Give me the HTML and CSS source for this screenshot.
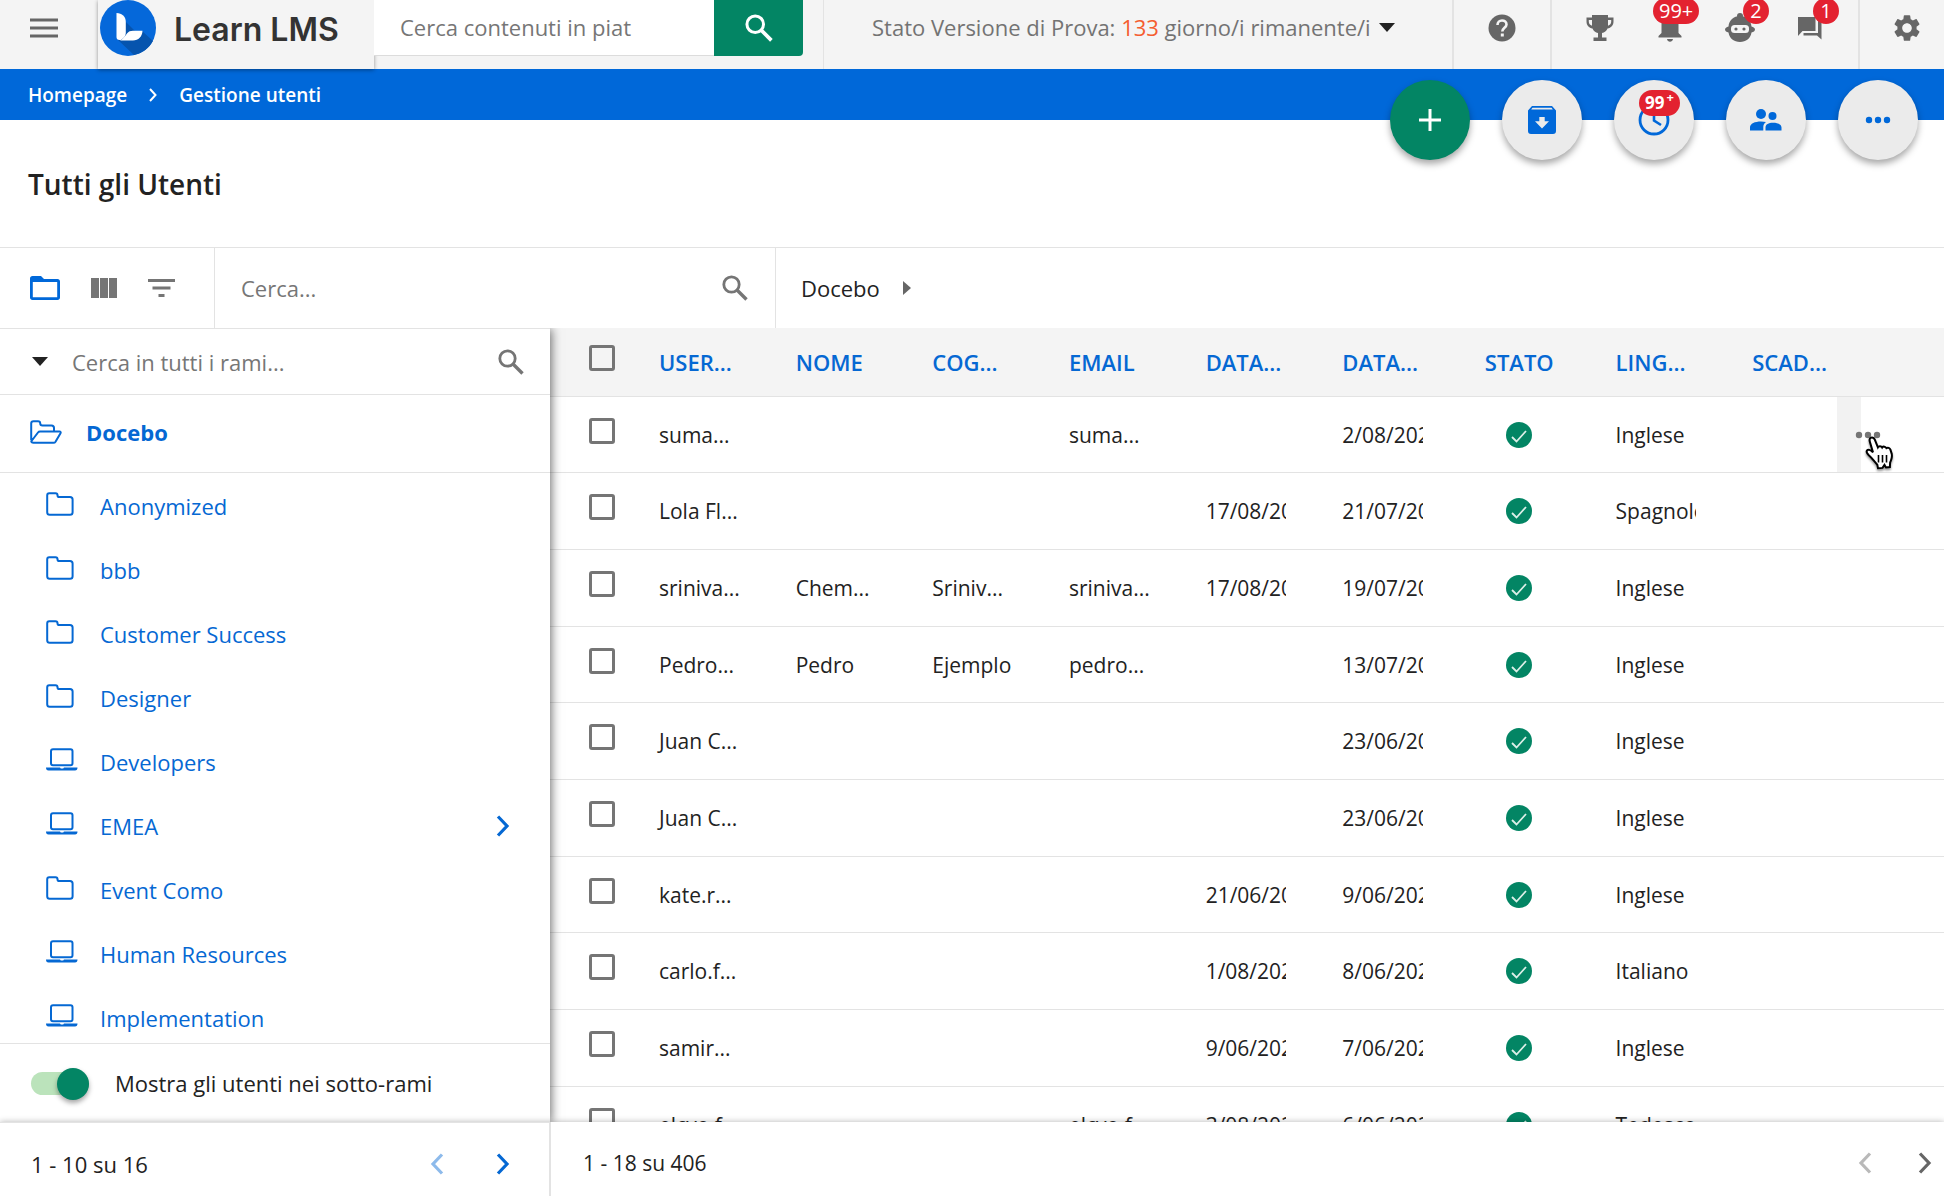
FILE: index.html
```html
<!DOCTYPE html>
<html lang="it">
<head>
    <meta charset="UTF-8">
    <meta name="viewport" content="width=device-width, initial-scale=1.0">
    <title>Gestione utenti - Learn LMS</title>
    <link rel="stylesheet" href="styles.css">
</head>
<body>
    <!-- Shared icons -->
    <svg class="sprite" aria-hidden="true">
        <symbol id="i-search" viewBox="0 0 26 26"><circle cx="9.5" cy="9.5" r="7.7" fill="none" stroke="currentColor" stroke-width="2.8"/><path d="M15 15l9.5 9.5" fill="none" stroke="currentColor" stroke-width="3.4"/></symbol>
        <symbol id="i-folder" viewBox="0 0 28 24"><path d="M3.2 1.2h6.3c1.3 0 2 .8 2 2 0 1.200.5 1.800 1.500 1.800h11c1.700 0 2.600.9 2.600 2.600v12.600c0 1.600-.9 2.500-2.600 2.500H3.700c-1.600 0-2.500-.9-2.500-2.500V3.400c0-1.400.7-2.200 2-2.200z" fill="none" stroke="currentColor" stroke-width="2"/></symbol>
        <symbol id="i-laptop" viewBox="0 0 32 24"><rect x="5" y="1.200" width="21.500" height="16" rx="2" fill="none" stroke="currentColor" stroke-width="2"/><path d="M0 19.500h14l.8 1h2.400l.8-1h13.500c0 1.800-.8 3-2.500 3h-26.500c-1.700 0-2.500-1.200-2.500-3z" fill="currentColor"/></symbol>
        <symbol id="i-next" viewBox="0 0 14 22"><path d="M2 1.500L11 11l-9 9.500" fill="none" stroke="currentColor" stroke-width="3.200"/></symbol>
        <symbol id="i-prev" viewBox="0 0 14 22"><path d="M12 1.500L3 11l9 9.500" fill="none" stroke="currentColor" stroke-width="3.200"/></symbol>
        <symbol id="i-check" viewBox="0 0 26 26"><circle cx="13" cy="13" r="13" fill="#038564"/><path d="M6 15l4.500 4.500L20 9" fill="none" stroke="#dcefe8" stroke-width="1.800"/></symbol>
        <symbol id="i-dots" viewBox="0 0 26 8"><circle cx="4" cy="4" r="3.200" fill="currentColor"/><circle cx="13" cy="4" r="3.200" fill="currentColor"/><circle cx="22" cy="4" r="3.200" fill="currentColor"/></symbol>
    </svg>

    <header class="topbar">
        <button class="menu-button" aria-label="Menu"><svg width="28" height="20" viewBox="0 0 28 20"><path d="M0 2h28M0 10h28M0 18h28" stroke="#666" stroke-width="3"/></svg></button>
        <a class="logo" href="#">
            <svg width="56" height="56" viewBox="0 0 56 56">
                <circle cx="28" cy="28" r="28" fill="#0568da"/>
                <path d="M25 21L35 31 42 31 53 41A28 28 0 0 1 34 55L18 40z" fill="#0654ae"/>
                <path d="M16.500 13c5.500 0 9.300 3.500 9.300 9v11c0 3-2 5-5 7h-1.300c-2 0-3-1-3-3z" fill="#fff"/>
                <path d="M20 40.500c3-1.500 5-4.500 7-7 1.500-2 3.500-2.700 6-2.700h9.500c-.3 6-4 9.700-9.500 9.700z" fill="#fff"/>
            </svg>
            <span>Learn LMS</span>
        </a>
        <form class="global-search">
            <input type="text" placeholder="Cerca contenuti in piat" aria-label="Cerca contenuti in piattaforma">
            <button type="button" aria-label="Cerca"><svg width="28" height="28"><use href="#i-search"/></svg></button>
        </form>
        <div class="trial">
            <button>Stato Versione di Prova: <b>133</b> giorno/i rimanente/i<svg width="16" height="9" viewBox="0 0 16 9"><path d="M0 0h16L8 9z" fill="#222"/></svg></button>
        </div>
        <div class="top-group help-group">
            <button aria-label="Aiuto"><svg width="28" height="28" viewBox="0 0 28 28"><circle cx="14" cy="14" r="13.500" fill="#666"/><path d="M9.500 11c0-2.800 2-4.500 4.500-4.500s4.500 1.600 4.500 4c0 3.200-4.200 3.500-4.200 7" fill="none" stroke="#f4f4f4" stroke-width="2.600"/><rect x="12.800" y="19.500" width="3" height="3" fill="#f4f4f4"/></svg></button>
        </div>
        <div class="top-group alerts-group">
            <button aria-label="Traguardi"><svg width="28" height="28" viewBox="0 0 28 28"><path d="M6 1h16v2.500h5.500v4c0 4-2.500 6.500-6 7-1 2.500-3 4-5.500 4.500v4.500h4.500V27h-13v-3.500H12V19c-2.500-.5-4.500-2-5.500-4.500-3.500-.5-6-3-6-7v-4H6zM2.800 6v1.500c0 2 1.200 3.600 3.200 4.300V6zM22 6v5.800c2-.7 3.200-2.300 3.200-4.300V6z" fill="#666"/></svg></button>
            <button aria-label="Notifiche"><svg width="24" height="28" viewBox="0 0 24 28"><path d="M12 0c1.500 0 2.300 1 2.300 2.500 4 1 6.200 4 6.200 8V19l3 3v1.500H.5V22l3-3v-8.500c0-4 2.200-7 6.200-8C9.700 1 10.500 0 12 0zM9 25h6c-.3 1.700-1.500 2.800-3 2.800S9.300 26.700 9 25z" fill="#666"/></svg><span class="badge badge-wide">99+</span></button>
            <button aria-label="Assistente"><svg width="30" height="30" viewBox="0 0 30 30"><circle cx="15" cy="3" r="3" fill="#666"/><path d="M15 3c6.500 0 11 4.500 11.500 10.500 2 .5 3.500 1.500 3.500 3s-1.500 2.500-3.500 3C25.500 25.500 21 29 15 29S4.500 25.500 3.500 19.500C1.500 19 0 18 0 16.500s1.500-2.500 3.500-3C4 7.500 8.500 3 15 3z" fill="#666"/><rect x="6" y="12" width="18" height="8" rx="3.500" fill="#f4f4f4"/><circle cx="11" cy="16" r="1.600" fill="#666"/><circle cx="19" cy="16" r="1.600" fill="#666"/></svg><span class="badge">2</span></button>
            <button aria-label="Messaggi"><svg width="24" height="24" viewBox="0 0 24 24"><path d="M0 1h17.500v14H4.500L0 20zM20 5h3.500v18.500L19 19.500H5.500V17H20z" fill="#666"/></svg><span class="badge">1</span></button>
        </div>
        <div class="top-group settings-group">
            <button aria-label="Impostazioni"><svg width="32" height="32" viewBox="0 0 24 24"><path fill="#666" d="M19.140 12.940c.04-.3.060-.61.060-.94 0-.32-.02-.64-.07-.94l2.030-1.580c.18-.14.230-.41.120-.61l-1.920-3.320c-.12-.22-.37-.29-.59-.22l-2.390.96c-.5-.38-1.030-.7-1.620-.94l-.36-2.540c-.04-.24-.24-.41-.48-.41h-3.840c-.24 0-.43.170-.47.410l-.36 2.540c-.59.240-1.130.570-1.620.94l-2.390-.96c-.22-.08-.47 0-.59.220L2.740 8.870c-.12.210-.08.470.120.610l2.030 1.580c-.05.300-.09.630-.09.940s.02.640.070.940l-2.030 1.580c-.18.140-.23.410-.12.610l1.920 3.320c.120.220.370.290.590.220l2.390-.96c.5.380 1.030.700 1.620.940l.36 2.540c.050.240.240.410.480.410h3.840c.240 0 .440-.170.470-.410l.36-2.540c.590-.240 1.130-.560 1.620-.940l2.390.96c.220.080.470 0 .590-.220l1.920-3.320c.120-.220.070-.470-.12-.610l-2.010-1.580zM12 15.600c-1.980 0-3.600-1.620-3.600-3.600s1.620-3.600 3.600-3.600 3.600 1.620 3.600 3.600-1.620 3.600-3.600 3.600z"/></svg></button>
        </div>
    </header>

    <div class="crumb-bar">
        <nav class="breadcrumb">
            <a href="#">Homepage</a>
            <svg width="8" height="14" viewBox="0 0 8 14"><path d="M1 1l5.500 6L1 13" fill="none" stroke="#fff" stroke-width="2"/></svg>
            <a href="#">Gestione utenti</a>
        </nav>
        <div class="fabs">
            <button class="fab fab-add" aria-label="Nuovo utente"><svg width="22" height="22" viewBox="0 0 22 22"><path d="M11 0v22M0 11h22" stroke="#fff" stroke-width="3"/></svg></button>
            <button class="fab" aria-label="Importa"><svg width="28" height="28" viewBox="0 0 28 28"><path d="M4 0h20l4 4.500V25c0 2-1 3-3 3H3c-2 0-3-1-3-3V4.500zM4.500 1.800L3.200 3.400h21.600l-1.300-1.600zM11.300 11v4.200H7l7 7.300 7-7.300h-4.300V11z" fill="currentColor" fill-rule="evenodd"/></svg></button>
            <button class="fab" aria-label="In attesa"><svg width="32" height="32" viewBox="0 0 32 32"><circle cx="16" cy="16" r="14" fill="none" stroke="currentColor" stroke-width="2.800"/><path d="M16 7v9.500l7 4.500" fill="none" stroke="currentColor" stroke-width="2.600"/></svg><span class="badge fab-badge">99<sup>+</sup></span></button>
            <button class="fab" aria-label="Gruppi"><svg width="32" height="22" viewBox="0 0 32 22"><circle cx="11" cy="5" r="5" fill="currentColor"/><circle cx="22.500" cy="7" r="4" fill="currentColor"/><path d="M0 21.500v-3c0-4 5-6 11-6 1.800 0 3.500.2 5 .6-1.800 1.300-2.700 3-2.700 5v3.400zM15.500 21.500v-3c0-3.200 3-4.800 7.500-4.800s8.500 1.600 8.500 4.800v3z" fill="currentColor"/></svg></button>
            <button class="fab" aria-label="Altro"><svg width="26" height="8"><use href="#i-dots"/></svg></button>
        </div>
    </div>

    <div class="page-head">
        <h1>Tutti gli Utenti</h1>
    </div>

    <div class="toolbar">
        <div class="view-buttons">
            <button class="active" aria-label="Rami"><svg width="30" height="24" viewBox="0 0 30 24"><path d="M2.500 0H11l3 3h13.500C29 3 30 4 30 5.500v16c0 1.500-1 2.500-2.500 2.500h-25C1 24 0 23 0 21.500v-19C0 1 1 0 2.500 0zM2.800 6v15.200h24.400V6z" fill="currentColor" fill-rule="evenodd"/></svg></button>
            <button aria-label="Colonne"><svg width="26" height="20" viewBox="0 0 26 20"><path d="M0 0h8v20H0zM9 0h8v20H9zM18 0h8v20h-8z" fill="currentColor"/></svg></button>
            <button aria-label="Filtri"><svg width="27" height="18" viewBox="0 0 27 18"><path d="M0 1.500h27M4.500 9h18M10.500 16.500h6" stroke="currentColor" stroke-width="3"/></svg></button>
        </div>
        <form class="user-search">
            <input type="text" placeholder="Cerca..." aria-label="Cerca utenti">
            <button type="button" aria-label="Cerca"><svg width="26" height="26"><use href="#i-search"/></svg></button>
        </form>
        <a class="branch-path" href="#">Docebo<svg width="8" height="14" viewBox="0 0 8 14"><path d="M0 0l8 7-8 7z" fill="#666"/></svg></a>
    </div>

    <main class="content">
        <aside class="sidebar">
            <form class="branch-search">
                <button type="button" aria-label="Opzioni di ricerca"><svg width="16" height="9" viewBox="0 0 16 9"><path d="M0 0h16L8 9z" fill="#222"/></svg></button>
                <input type="text" placeholder="Cerca in tutti i rami..." aria-label="Cerca in tutti i rami">
                <button type="button" aria-label="Cerca"><svg width="26" height="26"><use href="#i-search"/></svg></button>
            </form>
            <a class="branch-root" href="#">
                <svg width="32" height="24" viewBox="0 0 32 24"><path d="M1.200 20V3.500c0-1.500.8-2.300 2.300-2.300H8c1.500 0 2.200.7 2.200 2 0 1.500.8 2.300 2.300 2.300h9c1.600 0 2.500.9 2.500 2.500v3.500M1.500 21L8 12.500c.6-.8 1.200-1 2-1h19.500c1 0 1.500.8 1 1.700l-5 8.500c-.5.800-1.200 1.100-2 1.100h-20c-1.500 0-2.300-.8-2.300-2.300" fill="none" stroke="currentColor" stroke-width="2"/></svg>
                Docebo
            </a>
            <ul class="branches">
                <li><a href="#"><svg width="28" height="24"><use href="#i-folder"/></svg>Anonymized</a></li>
                <li><a href="#"><svg width="28" height="24"><use href="#i-folder"/></svg>bbb</a></li>
                <li><a href="#"><svg width="28" height="24"><use href="#i-folder"/></svg>Customer Success</a></li>
                <li><a href="#"><svg width="28" height="24"><use href="#i-folder"/></svg>Designer</a></li>
                <li><a href="#"><svg width="32" height="24"><use href="#i-laptop"/></svg>Developers</a></li>
                <li><a href="#"><svg width="32" height="24"><use href="#i-laptop"/></svg>EMEA</a><button aria-label="Apri EMEA"><svg width="14" height="22"><use href="#i-next"/></svg></button></li>
                <li><a href="#"><svg width="28" height="24"><use href="#i-folder"/></svg>Event Como</a></li>
                <li><a href="#"><svg width="32" height="24"><use href="#i-laptop"/></svg>Human Resources</a></li>
                <li><a href="#"><svg width="32" height="24"><use href="#i-laptop"/></svg>Implementation</a></li>
            </ul>
            <div class="switch-row">
                <input type="checkbox" id="showSub" class="switch" checked>
                <label for="showSub">Mostra gli utenti nei sotto-rami</label>
            </div>
        </aside>

        <section class="users">
            <table>
                <thead>
                    <tr>
                        <th class="col-check"><input type="checkbox" aria-label="Seleziona tutti"></th>
                        <th>USER...</th>
                        <th>NOME</th>
                        <th>COG...</th>
                        <th>EMAIL</th>
                        <th>DATA...</th>
                        <th>DATA...</th>
                        <th class="col-status">STATO</th>
                        <th>LING...</th>
                        <th>SCAD...</th>
                        <th class="col-actions"></th>
                    </tr>
                </thead>
                <tbody>
                    <tr>
                        <td class="col-check"><input type="checkbox" aria-label="Seleziona utente"></td>
                        <td>suma...</td><td></td><td></td><td>suma...</td><td></td><td><div class="clip">2/08/202</div></td>
                        <td class="col-status"><svg width="26" height="26"><use href="#i-check"/></svg></td>
                        <td>Inglese</td><td class="hovered"></td>
                        <td class="col-actions">
                            <button aria-label="Azioni"><svg width="26" height="8"><use href="#i-dots"/></svg></button>
                            <svg class="pointer" width="32" height="34" viewBox="0 0 32 34"><path d="M6.500 2c1.500-1 3.500-.3 4.200 1.300l3.200 8c.8-1.500 3.400-1.500 4.300.2 1-1.400 3.300-1.100 4.200.6 1.400-.9 3.400-.2 4 1.500l1.400 4.500c.6 3-.6 6-1.700 8.500l-.2 4.400-3.900.4-1.500-2.500-2 3-4.500.3-.7-3.500c-3-3-5-6.500-8.500-9.500-1.500-1.500-2.800-3-2-4.500 1-1.600 3.700-1.200 6.200 1.700L5.800 5.600C5.300 4 5.500 2.700 6.500 2z" fill="#fff" stroke="#000" stroke-width="2"/><path d="M14.500 19v7.500M18.500 19v7.500M22.500 19v7.500" stroke="#000" stroke-width="1.600"/></svg>
                        </td>
                    </tr>
                    <tr>
                        <td class="col-check"><input type="checkbox" aria-label="Seleziona utente"></td>
                        <td>Lola Fl...</td><td></td><td></td><td></td><td><div class="clip">17/08/20</div></td><td><div class="clip">21/07/20</div></td>
                        <td class="col-status"><svg width="26" height="26"><use href="#i-check"/></svg></td>
                        <td><div class="clip">Spagnolo</div></td><td></td><td></td>
                    </tr>
                    <tr>
                        <td class="col-check"><input type="checkbox" aria-label="Seleziona utente"></td>
                        <td>sriniva...</td><td>Chem...</td><td>Sriniv...</td><td>sriniva...</td><td><div class="clip">17/08/20</div></td><td><div class="clip">19/07/20</div></td>
                        <td class="col-status"><svg width="26" height="26"><use href="#i-check"/></svg></td>
                        <td>Inglese</td><td></td><td></td>
                    </tr>
                    <tr>
                        <td class="col-check"><input type="checkbox" aria-label="Seleziona utente"></td>
                        <td>Pedro...</td><td>Pedro</td><td>Ejemplo</td><td>pedro...</td><td></td><td><div class="clip">13/07/20</div></td>
                        <td class="col-status"><svg width="26" height="26"><use href="#i-check"/></svg></td>
                        <td>Inglese</td><td></td><td></td>
                    </tr>
                    <tr>
                        <td class="col-check"><input type="checkbox" aria-label="Seleziona utente"></td>
                        <td>Juan C...</td><td></td><td></td><td></td><td></td><td><div class="clip">23/06/20</div></td>
                        <td class="col-status"><svg width="26" height="26"><use href="#i-check"/></svg></td>
                        <td>Inglese</td><td></td><td></td>
                    </tr>
                    <tr>
                        <td class="col-check"><input type="checkbox" aria-label="Seleziona utente"></td>
                        <td>Juan C...</td><td></td><td></td><td></td><td></td><td><div class="clip">23/06/20</div></td>
                        <td class="col-status"><svg width="26" height="26"><use href="#i-check"/></svg></td>
                        <td>Inglese</td><td></td><td></td>
                    </tr>
                    <tr>
                        <td class="col-check"><input type="checkbox" aria-label="Seleziona utente"></td>
                        <td>kate.r...</td><td></td><td></td><td></td><td><div class="clip">21/06/20</div></td><td><div class="clip">9/06/202</div></td>
                        <td class="col-status"><svg width="26" height="26"><use href="#i-check"/></svg></td>
                        <td>Inglese</td><td></td><td></td>
                    </tr>
                    <tr>
                        <td class="col-check"><input type="checkbox" aria-label="Seleziona utente"></td>
                        <td>carlo.f...</td><td></td><td></td><td></td><td><div class="clip">1/08/202</div></td><td><div class="clip">8/06/202</div></td>
                        <td class="col-status"><svg width="26" height="26"><use href="#i-check"/></svg></td>
                        <td>Italiano</td><td></td><td></td>
                    </tr>
                    <tr>
                        <td class="col-check"><input type="checkbox" aria-label="Seleziona utente"></td>
                        <td>samir...</td><td></td><td></td><td></td><td><div class="clip">9/06/202</div></td><td><div class="clip">7/06/202</div></td>
                        <td class="col-status"><svg width="26" height="26"><use href="#i-check"/></svg></td>
                        <td>Inglese</td><td></td><td></td>
                    </tr>
                    <tr>
                        <td class="col-check"><input type="checkbox" aria-label="Seleziona utente"></td>
                        <td>elcvo.f...</td><td></td><td></td><td>elcvo.f...</td><td><div class="clip">3/08/202</div></td><td><div class="clip">6/06/202</div></td>
                        <td class="col-status"><svg width="26" height="26"><use href="#i-check"/></svg></td>
                        <td>Tedesco</td><td></td><td></td>
                    </tr>
                </tbody>
            </table>
        </section>
    </main>

    <footer class="pagers">
        <div class="pager branch-pager">
            <span>1 - 10 su 16</span>
            <button aria-label="Precedente" disabled><svg width="14" height="22"><use href="#i-prev"/></svg></button>
            <button aria-label="Successivo"><svg width="14" height="22"><use href="#i-next"/></svg></button>
        </div>
        <div class="pager user-pager">
            <span>1 - 18 su 406</span>
            <button aria-label="Precedente" disabled><svg width="14" height="22"><use href="#i-prev"/></svg></button>
            <button aria-label="Successivo"><svg width="14" height="22"><use href="#i-next"/></svg></button>
        </div>
    </footer>
</body>
</html>
```
FILE: styles.css
```css
* {
    margin: 0;
    padding: 0;
    box-sizing: border-box;
}

body {
    display: flex;
    flex-direction: column;
    height: 100vh;
    overflow: hidden;
    background-color: #fff;
    color: #222;
    font-family: "Open Sans", "Noto Sans", sans-serif;
    font-size: 22px;
    line-height: 30px;
}

button, input {
    font: inherit;
    color: inherit;
    background: none;
    border: none;
    border-radius: 0;
    outline: none;
}

button {
    display: flex;
    align-items: center;
    justify-content: center;
    cursor: pointer;
}

input::placeholder {
    color: #767676;
    opacity: 1;
}

a {
    color: inherit;
    text-decoration: none;
}

svg {
    display: block;
    flex-shrink: 0;
}

.sprite {
    position: absolute;
    width: 0;
    height: 0;
}

/* Top bar */
.topbar {
    display: flex;
    flex-shrink: 0;
    height: 69px;
    background-color: #f4f4f4;
}

.menu-button {
    width: 88px;
    height: 56px;
    margin-right: 10px;
}

.logo {
    display: flex;
    gap: 18px;
    width: 276px;
    padding-left: 2px;
    background-color: #f4f4f4;
    box-shadow: 0 1px 4px rgba(0, 0, 0, 0.4);
    z-index: 1;
    font-family: Inter, sans-serif;
    font-size: 32px;
    font-weight: 600;
    line-height: 60px;
    color: #333;
}

.global-search {
    display: flex;
    width: 429px;
    height: 56px;
    z-index: 2;
}

.global-search input {
    flex: 1;
    min-width: 0;
    padding: 0 0 2px 26px;
    background-color: #fff;
    border-bottom: 1px solid #dcdcdc;
}

.global-search button {
    width: 89px;
    background-color: #038564;
    color: #fff;
    border-radius: 0 0 4px 0;
}

.trial {
    flex: 1;
    margin-left: 20px;
    padding-left: 48px;
    border-left: 1px solid #e3e3e3;
    color: #737373;
    white-space: nowrap;
}

.trial button {
    height: 54px;
    white-space: pre;
}

.trial b {
    font-weight: 400;
    color: #f55d30;
}

.trial svg {
    margin-left: 8px;
}

.top-group {
    display: flex;
    border-left: 2px solid #e3e3e3;
}

.top-group button {
    position: relative;
    width: 70px;
    height: 56px;
}

.help-group {
    padding: 0 13px;
}

.alerts-group {
    padding: 0 13px;
}

.settings-group {
    padding: 0 2px 0 12px;
}

.badge {
    position: absolute;
    top: -2px;
    left: 38px;
    min-width: 26px;
    padding: 0 6px;
    border-radius: 13px;
    background-color: #e32230;
    color: #fff;
    font-size: 20px;
    font-weight: 500;
    line-height: 26px;
    text-align: center;
}

.badge-wide {
    left: 18px;
}

/* Breadcrumb and floating buttons */
.crumb-bar {
    display: flex;
    flex-shrink: 0;
    justify-content: space-between;
    height: 51px;
    padding: 0 26px 0 28px;
    background-color: #0068d9;
}

.breadcrumb {
    display: flex;
    align-items: center;
    gap: 22px;
    color: #fff;
    font-size: 19px;
    font-weight: 600;
}

.fabs {
    display: flex;
    gap: 32px;
    padding-top: 11px;
    z-index: 1;
}

.fab {
    position: relative;
    width: 80px;
    height: 80px;
    border-radius: 50%;
    background-color: #ebebeb;
    color: #0068d9;
    box-shadow: 0 4px 7px rgba(0, 0, 0, 0.35);
}

.fab-add {
    background-color: #038564;
}

.fab-badge {
    top: 10px;
    left: 25px;
    width: 41px;
    font-size: 17px;
    font-weight: 700;
}

.fab-badge sup {
    margin-left: 2px;
    font-size: 13px;
    line-height: 0;
}

.page-head {
    flex-shrink: 0;
    padding: 44px 28px 42px;
}

.page-head h1 {
    font-size: 28px;
    font-weight: 600;
    line-height: 41px;
}

/* Toolbar */
.toolbar {
    display: flex;
    flex-shrink: 0;
    height: 81px;
    border-top: 1px solid #e3e3e3;
}

.view-buttons {
    display: flex;
    align-items: center;
    gap: 31px;
    width: 214px;
    padding-left: 30px;
    color: #757575;
}

.view-buttons .active {
    color: #0068d9;
}

.user-search {
    display: flex;
    align-items: center;
    width: 562px;
    padding: 0 27px 0 26px;
    border-left: 1px solid #e3e3e3;
    border-right: 1px solid #e3e3e3;
}

.user-search input,
.branch-search input {
    flex: 1;
    min-width: 0;
}

.user-search button,
.branch-search button {
    color: #757575;
}

.branch-path {
    display: flex;
    align-items: center;
    gap: 23px;
    padding-left: 25px;
}

/* Branch tree */
.content {
    display: flex;
    flex: 1;
    min-height: 0;
    overflow: hidden;
}

.sidebar {
    display: flex;
    flex-direction: column;
    flex-shrink: 0;
    width: 550px;
    border-top: 1px solid #e3e3e3;
    background-color: #fff;
    box-shadow: 1px 1px 10px rgba(0, 0, 0, 0.6);
    z-index: 1;
}

.branch-search {
    display: flex;
    align-items: center;
    gap: 24px;
    height: 66px;
    padding: 0 26px 0 32px;
    border-bottom: 1px solid #e3e3e3;
}

.branch-root {
    display: flex;
    align-items: center;
    gap: 24px;
    height: 78px;
    padding: 0 0 4px 30px;
    border-bottom: 1px solid #e3e3e3;
    color: #0568d3;
    font-weight: 700;
}

.branches {
    flex: 1;
    min-height: 0;
    padding-top: 1px;
    overflow: hidden;
    list-style: none;
}

.branches li {
    display: flex;
    align-items: center;
    justify-content: space-between;
    height: 64px;
    padding: 0 40px 0 46px;
    color: #0568d3;
}

.branches a {
    display: grid;
    grid-template-columns: 54px auto;
    align-items: center;
}

.branches a svg {
    margin-bottom: 4px;
}

.switch-row {
    display: flex;
    align-items: center;
    gap: 26px;
    height: 79px;
    padding-left: 31px;
    border-top: 1px solid #e3e3e3;
}

.switch {
    position: relative;
    width: 58px;
    height: 23px;
    appearance: none;
    border-radius: 12px;
    background-color: #bbe3bb;
    cursor: pointer;
}

.switch::after {
    content: "";
    position: absolute;
    top: -4px;
    right: 0;
    width: 32px;
    height: 32px;
    border-radius: 50%;
    background-color: #038564;
    box-shadow: 0 3px 5px rgba(0, 0, 0, 0.35);
}

/* Users table */
.users {
    flex: 1;
    min-width: 0;
}

.users table {
    width: 100%;
    table-layout: fixed;
    border-collapse: separate;
    border-spacing: 0;
    font-size: 21px;
}

.users th,
.users td {
    height: 77px;
    padding: 0 28px;
    border-bottom: 1px solid #e3e3e3;
    text-align: left;
    white-space: nowrap;
}

.users th {
    height: 69px;
    background-color: #f4f4f4;
    color: #0568d3;
    font-size: 22px;
    font-weight: 600;
}

.users tbody tr:nth-child(3n+1) td {
    height: 76px;
}

.clip {
    overflow: hidden;
}

.users .col-check {
    width: 81px;
    padding: 0 0 8px 39px;
}

.users .col-status {
    padding: 0;
    text-align: center;
}

.col-status svg {
    margin: 0 auto;
}

.users .col-actions {
    position: relative;
    width: 83px;
    padding: 0;
}

.users .hovered {
    background: linear-gradient(#f2f2f2, #f2f2f2) right / 24px 100% no-repeat;
}

.col-actions button {
    margin-left: -6px;
    color: #757575;
}

.pointer {
    position: absolute;
    top: 39px;
    left: 3px;
    filter: drop-shadow(0 2px 1px rgba(0, 0, 0, 0.4));
}

.col-check input {
    display: block;
    width: 26px;
    height: 26px;
    appearance: none;
    border: 3px solid #757575;
    border-radius: 3px;
}

/* Pagination */
.pagers {
    display: flex;
    flex-shrink: 0;
    height: 74px;
    background-color: #fff;
    box-shadow: 0 0 6px rgba(0, 0, 0, 0.3);
    z-index: 2;
}

.pager {
    display: flex;
    align-items: center;
    padding-top: 8px;
}

.pager span {
    flex: 1;
}

.pager button:disabled {
    opacity: 0.45;
}

.branch-pager {
    gap: 52px;
    width: 551px;
    padding-right: 39px;
    padding-left: 31px;
    border-top: 1px solid #e3e3e3;
    border-right: 2px solid #e3e3e3;
}

.branch-pager button {
    color: #0568d3;
}

.user-pager {
    flex: 1;
    gap: 46px;
    padding-right: 12px;
    padding-left: 32px;
    font-size: 21px;
}

.user-pager button {
    color: #666;
}
```
